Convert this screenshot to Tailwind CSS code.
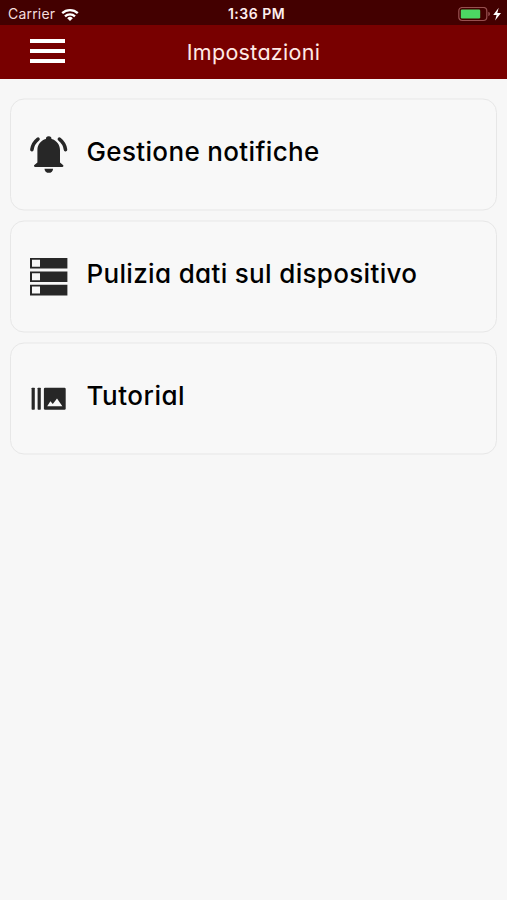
<!DOCTYPE html>
<html lang="it">
  <head>
    <meta charset="UTF-8" />
    <meta name="viewport" content="width=device-width, initial-scale=1.0" />
    <title>Impostazioni</title>
    <script src="https://cdn.jsdelivr.net/npm/@tailwindcss/browser@4"></script>
  </head>
  <body class="min-h-screen bg-[#f7f7f7] font-['Inter',sans-serif] text-black">
    <!-- Status bar -->
    <div class="grid h-[25px] grid-cols-3 items-center bg-[#430000] pt-[3px] pr-[5px] pl-2 text-white">
      <div class="flex items-center gap-[6px]">
        <span class="text-[14px] leading-5 tracking-[0.2px] text-[#f3dede]">Carrier</span>
        <svg class="h-[13px] w-[18px]" viewBox="0 0 18 13" fill="none" stroke="#fff" stroke-width="2.3">
          <path d="M1.2 5.2a11.2 11.2 0 0 1 15.6 0" />
          <path d="M4 8.3a7.2 7.2 0 0 1 10 0" />
          <path d="M6.2 10.2a4 4 0 0 1 5.6 0L9 13z" fill="#fff" stroke="none" />
        </svg>
      </div>
      <span class="pl-[3px] text-center text-[14px] leading-5 font-semibold tracking-[0.5px] whitespace-nowrap text-[#fdeeee]">1:36 PM</span>
      <div class="flex items-center justify-end">
        <svg class="h-[15px] w-[44px]" viewBox="0 0 44 15">
          <rect x="0.8" y="0.5" width="28" height="13" rx="3.5" fill="none" stroke="#985050" stroke-width="1.2" />
          <rect x="2.8" y="2.5" width="19.4" height="9" rx="1.2" fill="#4cd663" />
          <path d="M30.3 4.8q1.7.6 1.7 2.2t-1.7 2.2z" fill="#985050" />
          <path d="M40.7 0.7l-5.5 7.2h3.4l-1.5 5.600 5.900-7.600h-3.700z" fill="#fff" />
        </svg>
      </div>
    </div>

    <!-- Header -->
    <header class="grid h-[54px] grid-cols-[1fr_auto_1fr] items-center bg-[#780000] text-[#ffe9e6]">
      <button class="mb-[2px] ml-[30px] flex w-[35px] flex-col gap-[6px]" aria-label="Menu">
        <span class="h-[4px] w-full bg-white"></span>
        <span class="h-[4px] w-full bg-white"></span>
        <span class="h-[4px] w-full bg-white"></span>
      </button>
      <h1 class="text-[21.5px] leading-6 tracking-[0.3px] [font-feature-settings:'cv11']">Impostazioni</h1>
    </header>

    <!-- Settings list -->
    <main class="flex flex-col gap-[10px] px-[10px] pt-[19px]">
      <a class="flex h-[112px] translate-y-[0.5px] items-center rounded-[14px] border-[1.5px] border-[#e7e7e7] bg-[#f8f8f8] pl-[18px]">
        <svg class="size-10 shrink-0" viewBox="0 0 40 40" fill="#272727">
          <path d="M19.7 1.7a2.7 2.7 0 0 1 2.8 2.7c5 1.3 8.5 5.6 8.5 11.1V27.9l3 2.5a1.2 1.2 0 0 1-.7 2.1H6.2a1.2 1.2 0 0 1-.8-2.1l3-2.5V15.5c0-5.5 3.5-9.8 8.5-11.1a2.7 2.7 0 0 1 2.8-2.7z" />
          <path d="M15.5 34.3h8.6a4.3 4 0 0 1-8.6 0z" />
          <path d="M9 4.7C5.4 7.5 3.5 10.8 2.9 15.1M30.4 4.7C34 7.5 35.9 10.8 36.5 15.1" fill="none" stroke="#272727" stroke-width="3.6" stroke-linecap="round" />
        </svg>
        <span class="mb-[7px] ml-[17.5px] text-[26px] leading-8 font-medium tracking-[0.35px] [font-feature-settings:'cv11']">Gestione notifiche</span>
      </a>

      <a class="flex h-[112px] translate-y-[0.5px] items-center rounded-[14px] border-[1.5px] border-[#e7e7e7] bg-[#f8f8f8] pl-[18px]">
        <svg class="size-10 shrink-0" viewBox="0 0 40 40" fill="#272727">
          <path d="M1 1.5h37.4v10.6H1zM1 15h37.4v10.6H1zM1 28.3h37.4v10.6H1z" />
          <path d="M3 3.3h8v7H3zM3 16.8h8v7H3zM3 30.1h8v7H3z" fill="#f8f8f8" />
        </svg>
        <span class="mb-[7px] ml-[17.5px] text-[26px] leading-8 font-medium tracking-[0.33px] [font-feature-settings:'cv11']">Pulizia dati sul dispositivo</span>
      </a>

      <a class="flex h-[112px] translate-y-[0.5px] items-center rounded-[14px] border-[1.5px] border-[#e7e7e7] bg-[#f8f8f8] pl-[18px]">
        <svg class="size-10 shrink-0" viewBox="0 0 40 40" fill="#272727">
          <rect x="2.6" y="9.2" width="3.2" height="22" rx="0.6" />
          <rect x="8.6" y="9.2" width="3.2" height="22" rx="0.6" />
          <rect x="14.9" y="9.2" width="21.8" height="22" rx="1.2" />
          <path d="M18.2 27.8l3.2-5 2.4 2.8 4.2-5.6 5.4 7.8z" fill="#f8f8f8" />
        </svg>
        <span class="mb-[7px] ml-[17.5px] text-[26px] leading-8 font-medium tracking-[0.5px] [font-feature-settings:'cv11']">Tutorial</span>
      </a>
    </main>
  </body>
</html>
